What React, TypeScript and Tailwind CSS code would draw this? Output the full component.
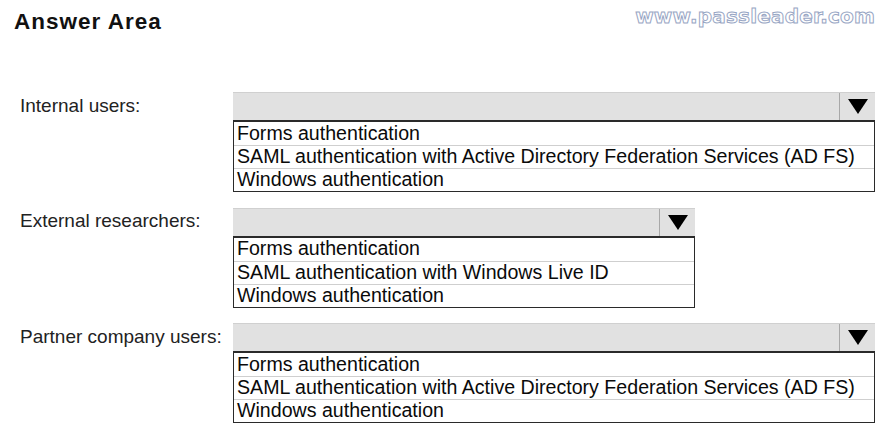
import React from 'react'

type Question = {
    label: string
    width: string
    options: string[]
}

const questions: Question[] = [
    {
        label: 'Internal users:',
        width: 'w-[642px]',
        options: [
            'Forms authentication',
            'SAML authentication with Active Directory Federation Services (AD FS)',
            'Windows authentication'
        ]
    },
    {
        label: 'External researchers:',
        width: 'w-[462px]',
        options: [
            'Forms authentication',
            'SAML authentication with Windows Live ID',
            'Windows authentication'
        ]
    },
    {
        label: 'Partner company users:',
        width: 'w-[642px]',
        options: [
            'Forms authentication',
            'SAML authentication with Active Directory Federation Services (AD FS)',
            'Windows authentication'
        ]
    }
]

function Dropdown({ width, options }: { width: string; options: string[] }) {
    return (
        <div className={`${width} flex flex-col`}>
            <div className="h-[28px] flex bg-[#e1e1e1] border-t border-[#d0d0d0]">
                <div className="flex-1" />
                <div className="w-[36px] border-l border-[#a8a8a8] flex items-center justify-center">
                    <svg width="20" height="15" viewBox="0 0 20 15">
                        <polygon points="0,0 20,0 10,15" fill="#000" />
                    </svg>
                </div>
            </div>
            <div className="border border-t-2 border-[#2a2a2a] bg-white">
                {options.map((opt, i) => (
                    <div
                        key={opt}
                        className={`h-[23px] flex items-center pl-[3px] text-[19.6px] text-[#0a0a0a] leading-none ${i > 0 ? 'border-t border-[#cfcfcf]' : ''}`}
                    >
                        {opt}
                    </div>
                ))}
            </div>
        </div>
    )
}

export default function App() {
    return (
        <div className="w-[887px] h-[431px] bg-white relative overflow-hidden font-['Liberation_Sans',Arial,sans-serif]">
            <div className="absolute top-[1px] right-[12px] text-[20px] font-bold tracking-[0.2px] font-['DejaVu_Sans',sans-serif] text-white [-webkit-text-stroke:1px_#98a6c4]">
                www.passleader.com
            </div>
            <div className="pl-[14px] pt-[8px] text-[22.5px] leading-[28px] font-bold tracking-[1px] text-[#111]">
                Answer Area
            </div>
            <div className="mt-[56px] flex flex-col gap-[15.5px]">
                {questions.map(q => (
                    <div key={q.label} className="flex">
                        <div className="w-[233px] pl-[20px] h-[28px] flex items-center text-[19px] text-[#222]">
                            {q.label}
                        </div>
                        <Dropdown width={q.width} options={q.options} />
                    </div>
                ))}
            </div>
        </div>
    )
}
